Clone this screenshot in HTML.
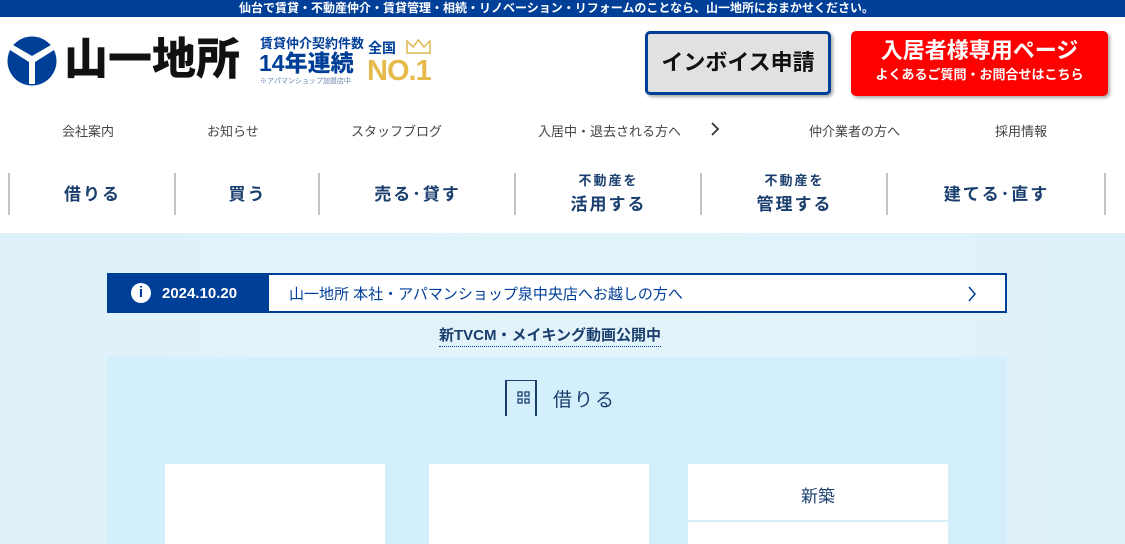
<!DOCTYPE html>
<html><head><meta charset="utf-8"><style>
*{margin:0;padding:0;box-sizing:border-box}
body{width:1125px;height:544px;overflow:hidden;background:#fff;font-family:"Liberation Sans","Noto Sans CJK JP",sans-serif;position:relative}
.a{position:absolute}
.top{left:0;top:0;width:1113px;height:17px;background:#003f98;color:#fff;font-size:12px;font-weight:bold;text-align:center;line-height:16px}
.nav1 span{position:absolute;top:121px;font-size:13px;color:#444}
.nav2 .d{position:absolute;top:173px;width:2px;height:42px;background:#c4c4c4}
.nav2 .t{position:absolute;color:#1a3e6e;font-weight:bold;font-size:17px;letter-spacing:2px;text-align:center;line-height:25px}
</style></head><body>
<div class="a" style="left:0;top:0;width:1125px;height:17px;background:#003f98"></div>
<div class="a top">仙台で賃貸・不動産仲介・賃貸管理・相続・リノベーション・リフォームのことなら、山一地所におまかせください。</div>
<svg class="a" style="left:7px;top:36px" width="50" height="50" viewBox="0 0 50 50"><circle cx="25" cy="25" r="24.5" fill="#003f98"/><path d="M3 14 L22 26 L22 48 L28 48 L28 26 L47 14 L44 9 L25 20 L6 9Z" fill="#fff"/></svg>
<div class="a" style="left:64px;top:30px;font-size:44px;font-weight:900;color:#111;letter-spacing:0px;line-height:60px">山一地所</div>
<div class="a" style="left:260px;top:36px;font-size:13px;color:#003f98;font-weight:bold;line-height:15px">賃貸仲介契約件数</div>
<div class="a" style="left:259px;top:49px;font-size:23px;color:#003f98;font-weight:900;line-height:28px">14年連続</div>
<div class="a" style="left:260px;top:77px;font-size:7px;color:#6680b0;line-height:9px">※アパマンショップ加盟店中</div>
<div class="a" style="left:368px;top:38px;font-size:14px;color:#003f98;font-weight:bold">全国</div>
<svg class="a" style="left:406px;top:39px" width="25" height="15"><path d="M1 2 L1 14 L24 14 L24 2 L18 8 L12.5 1 L7 8Z" fill="none" stroke="#e0b850" stroke-width="1.5"/></svg>
<div class="a" style="left:367px;top:55px;font-size:29px;color:#e6bb4c;font-weight:900;line-height:32px;letter-spacing:-1px">NO.1</div>
<div class="a" style="left:645px;top:31px;width:186px;height:64px;background:#e1e1e1;border:3px solid #003f98;border-radius:5px;box-shadow:2px 2px 3px #aaa;font-size:22px;font-weight:bold;color:#111;text-align:center;line-height:58px">インボイス申請</div>
<div class="a" style="left:851px;top:31px;width:257px;height:65px;background:#f00;border-radius:5px;box-shadow:2px 2px 3px #aaa;color:#fff;text-align:center;font-weight:bold"><div style="font-size:22px;line-height:26px;margin-top:7px">入居者様専用ページ</div><div style="font-size:13px;line-height:22px">よくあるご質問・お問合せはこちら</div></div>
<div class="nav1">
<span style="left:62px">会社案内</span><span style="left:207px">お知らせ</span><span style="left:351px">スタッフブログ</span><span style="left:538px">入居中・退去される方へ</span><span style="left:809px">仲介業者の方へ</span><span style="left:995px">採用情報</span></div>
<svg class="a" style="left:710px;top:122px" width="12" height="14"><path d="M2 1 L8 7 L2 13" fill="none" stroke="#333" stroke-width="1.8"/></svg>
<div class="nav2">
<div class="d" style="left:8px"></div><div class="d" style="left:174px"></div><div class="d" style="left:318px"></div><div class="d" style="left:514px"></div><div class="d" style="left:700px"></div><div class="d" style="left:886px"></div><div class="d" style="left:1104px"></div>
<div class="t" style="left:10px;width:165px;top:182px">借りる</div>
<div class="t" style="left:176px;width:143px;top:182px">買う</div>
<div class="t" style="left:320px;width:195px;top:182px">売る･貸す</div>
<div class="t" style="left:516px;width:185px;top:170px"><div style="font-size:13px;line-height:22px">不動産を</div>活用する</div>
<div class="t" style="left:702px;width:185px;top:170px"><div style="font-size:13px;line-height:22px">不動産を</div>管理する</div>
<div class="t" style="left:888px;width:217px;top:182px">建てる･直す</div>
</div>
<div class="a" style="left:0;top:233px;width:1125px;height:311px;background:linear-gradient(90deg,#def1f9,#e3f3fa 50%,#def2fa)"></div>
<div class="a" style="left:107px;top:273px;width:900px;height:40px;border:2px solid #003f98;background:#fff"></div>
<div class="a" style="left:107px;top:273px;width:162px;height:40px;background:#003f98;color:#fff;font-weight:bold;font-size:15px;display:flex;align-items:center"><span style="display:inline-block;width:20px;height:20px;border-radius:50%;background:#fff;color:#003f98;text-align:center;line-height:20px;font-size:15px;margin:0 11px 0 24px">i</span>2024.10.20</div>
<div class="a" style="left:289px;top:283px;font-size:15px;color:#003f98">山一地所 本社・アパマンショップ泉中央店へお越しの方へ</div>
<svg class="a" style="left:967px;top:286px" width="10" height="16"><path d="M2 1 L8 8 L2 15" fill="none" stroke="#003f98" stroke-width="1.5"/></svg>
<div class="a" style="left:439px;top:326px;font-size:15px;font-weight:bold;color:#1a3e6e;border-bottom:1px dotted #003f98;line-height:20px">新TVCM・メイキング動画公開中</div>
<div class="a" style="left:107px;top:357px;width:900px;height:187px;background:#d3effb"></div>
<div class="a" style="left:505px;top:380px;width:32px;height:36px;border-left:2px solid #1a3e6e;border-right:2px solid #1a3e6e;border-top:1px solid #1a3e6e"></div>
<svg class="a" style="left:517px;top:391px" width="14" height="14"><g fill="none" stroke="#1a3e6e" stroke-width="1.3"><rect x="1" y="1" width="4" height="4"/><rect x="8" y="1" width="4" height="4"/><rect x="1" y="8" width="4" height="4"/><rect x="8" y="8" width="4" height="4"/></g></svg>
<div class="a" style="left:553px;top:385px;font-size:19px;color:#1a3e6e;letter-spacing:2px">借りる</div>
<div class="a" style="left:165px;top:464px;width:220px;height:80px;background:#fff"></div>
<div class="a" style="left:429px;top:464px;width:220px;height:80px;background:#fff"></div>
<div class="a" style="left:688px;top:464px;width:260px;height:80px;background:#fff"></div>
<div class="a" style="left:688px;top:520px;width:260px;height:2px;background:#d6eef8"></div>
<div class="a" style="left:688px;top:482px;width:260px;text-align:center;font-size:17px;color:#1a3e6e">新築</div>
</body></html>
